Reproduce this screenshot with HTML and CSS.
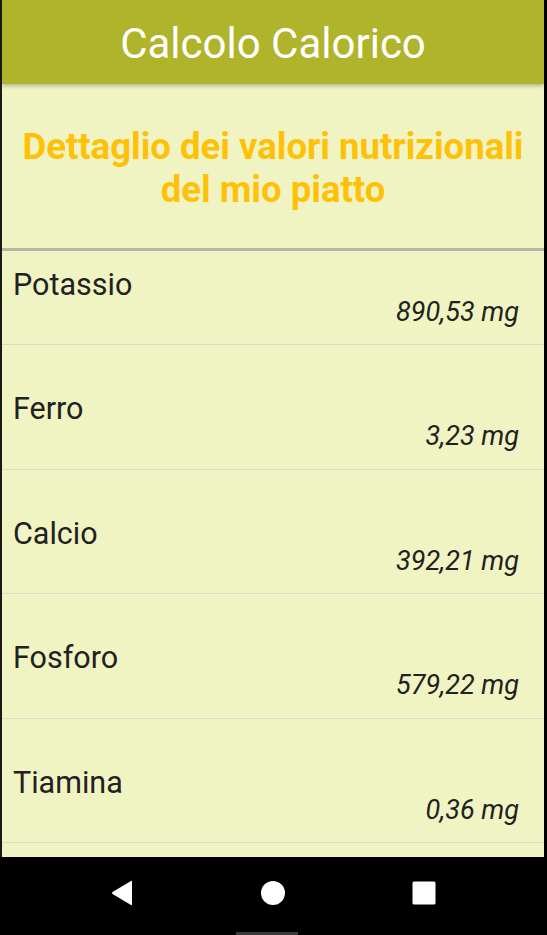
FILE: index.html
```html
<!DOCTYPE html>
<html lang="it">
<head>
<meta charset="utf-8">
<title>Calcolo Calorico</title>
<link rel="stylesheet" href="styles.css">
</head>
<body>
<div class="screen">
  <div class="app">
    <header class="appbar"><h1 class="appbar-title">Calcolo Calorico</h1></header>
    <section class="intro">
      <h2 class="intro-title">Dettaglio dei valori nutrizionali<br>del mio piatto</h2>
    </section>
    <ul class="list">
      <li class="row row--first"><span class="row-name">Potassio</span><span class="row-value">890,53 mg</span></li>
      <li class="row"><span class="row-name">Ferro</span><span class="row-value">3,23 mg</span></li>
      <li class="row"><span class="row-name">Calcio</span><span class="row-value">392,21 mg</span></li>
      <li class="row"><span class="row-name">Fosforo</span><span class="row-value">579,22 mg</span></li>
      <li class="row"><span class="row-name">Tiamina</span><span class="row-value">0,36 mg</span></li>
    </ul>
  </div>
  <nav class="navbar">
    <svg class="nav-icon" width="24" height="26" viewBox="0 0 24 26"><path d="M21 1.5 L21 24.5 Q21 25.5 20 25 L1.5 14 Q0.5 13 1.5 12 L20 1 Q21 0.5 21 1.5 Z" fill="#fff"/></svg>
    <svg class="nav-icon" width="26" height="26" viewBox="0 0 26 26"><circle cx="13" cy="13" r="12" fill="#fff"/></svg>
    <svg class="nav-icon" width="24" height="24" viewBox="0 0 24 24"><rect x="0.5" y="0.5" width="23" height="23" rx="1.5" fill="#fff"/></svg>
    <span class="nav-handle"></span>
  </nav>
</div>
</body>
</html>
```
FILE: styles.css
```css
* { box-sizing: border-box; }
html, body { margin: 0; padding: 0; }
body {
  width: 547px;
  height: 935px;
  overflow: hidden;
  background: #000;
  font-family: Roboto, "Liberation Sans", sans-serif;
}
.screen {
  height: 935px;
  display: flex;
  flex-direction: column;
}
.app {
  flex: 1;
  min-height: 0;
  display: flex;
  flex-direction: column;
  background: #F0F4C3;
  border-left: 2px solid #1a1a14;
  border-right: 3px solid #000;
  overflow: hidden;
}
.appbar {
  height: 84px;
  flex: none;
  background: #AFB42B;
  display: flex;
  align-items: center;
  justify-content: center;
  box-shadow: 0 2px 4px rgba(0,0,0,0.25);
  position: relative;
  z-index: 1;
}
.appbar-title {
  margin: 0;
  color: #fff;
  font-weight: 400;
  font-size: 42px;
  line-height: 1;
  padding-top: 4px;
}
.intro {
  flex: none;
  height: 167px;
  padding-top: 41px;
  border-bottom: 3px solid #b6b8a4;
}
.intro-title {
  margin: 0;
  text-align: center;
  color: #FFC107;
  font-weight: 700;
  font-size: 36.5px;
  line-height: 43px;
}
.list {
  list-style: none;
  margin: 0;
  padding: 0;
  flex: 1;
  min-height: 0;
  overflow: hidden;
}
.row {
  height: 124.5px;
  border-bottom: 1px solid #d9dcc4;
  display: flex;
  flex-direction: column;
  padding: 49px 25px 0 11px;
}
.row--first {
  height: 94px;
  padding-top: 19px;
}
.row-name {
  font-size: 30.5px;
  line-height: 30px;
  color: #212121;
}
.row-value {
  align-self: flex-end;
  font-style: italic;
  font-size: 27px;
  line-height: 28px;
  color: #212121;
  margin-top: -2px;
}
.navbar {
  flex: none;
  height: 78px;
  background: #000;
  display: flex;
  align-items: center;
  padding-left: 111px;
  padding-bottom: 6px;
  position: relative;
}
.nav-icon { display: block; flex: none; }
.nav-icon:nth-child(1) { margin-right: 125px; }
.nav-icon:nth-child(2) { margin-right: 126px; }
.nav-handle {
  position: absolute;
  left: 236px;
  bottom: 0;
  width: 62px;
  height: 3px;
  background: #3a3a3a;
}
```
